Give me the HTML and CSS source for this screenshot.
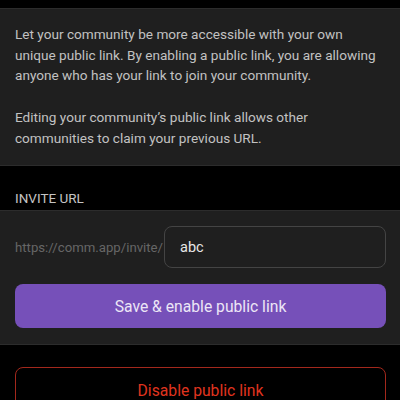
FILE: index.html
```html
<!DOCTYPE html>
<html>
<head>
<meta charset="utf-8">
<link rel="stylesheet" href="styles.css">
</head>
<body>
<div class="top"></div>
<section class="panel info">
  <p>Let your community be more accessible with your own<br>unique public link. By enabling a public link, you are allowing<br>anyone who has your link to join your community.</p>
  <p>Editing your community’s public link allows other<br>communities to claim your previous URL.</p>
</section>
<div class="label">INVITE URL</div>
<section class="panel form">
  <div class="url-row">
    <span class="prefix">https://comm.app/invite/</span>
    <div class="input">abc</div>
  </div>
  <button class="primary">Save &amp; enable public link</button>
</section>
<div class="danger-wrap">
  <button class="danger">Disable public link</button>
</div>
</body>
</html>
```
FILE: styles.css
```css
html, body {
  margin: 0;
  padding: 0;
  background: #000;
  font-family: Roboto, "Noto Sans", sans-serif;
}
.top {
  height: 8px;
}
.panel {
  background: #1f1f1f;
  border-top: 1px solid #2c2c2c;
  border-bottom: 1px solid #2c2c2c;
}
.info {
  padding: 15px 10px 17px 15px;
}
.info p {
  margin: 0;
  font-size: 13.6px;
  line-height: 20.7px;
  color: #c2c2c2;
  white-space: nowrap;
}
.info p + p {
  margin-top: 20.7px;
}
.label {
  padding: 23px 15px 3px;
  font-size: 13.5px;
  line-height: 18px;
  color: #c4c4c4;
}
.form {
  padding: 15px 14px 16px 15px;
  display: flex;
  flex-direction: column;
  gap: 16px;
}
.url-row {
  display: flex;
  align-items: center;
  gap: 1px;
}
.prefix {
  font-size: 13.2px;
  color: #666;
  white-space: nowrap;
}
.input {
  flex: 1;
  height: 42px;
  box-sizing: border-box;
  border: 1px solid #444;
  border-radius: 8px;
  padding: 0 15px;
  display: flex;
  align-items: center;
  font-size: 14.5px;
  color: #e6e6e6;
}
button {
  font-family: inherit;
  font-size: 15.7px;
  border-radius: 8px;
  width: 100%;
  cursor: pointer;
}
.primary {
  height: 44px;
  background: #7650b9;
  border: none;
  color: #ece6f6;
}
.danger-wrap {
  padding: 22px 14px 0 15px;
}
.danger {
  height: 46px;
  background: #000;
  border: 1px solid #a3281c;
  color: #e0341f;
}
```
